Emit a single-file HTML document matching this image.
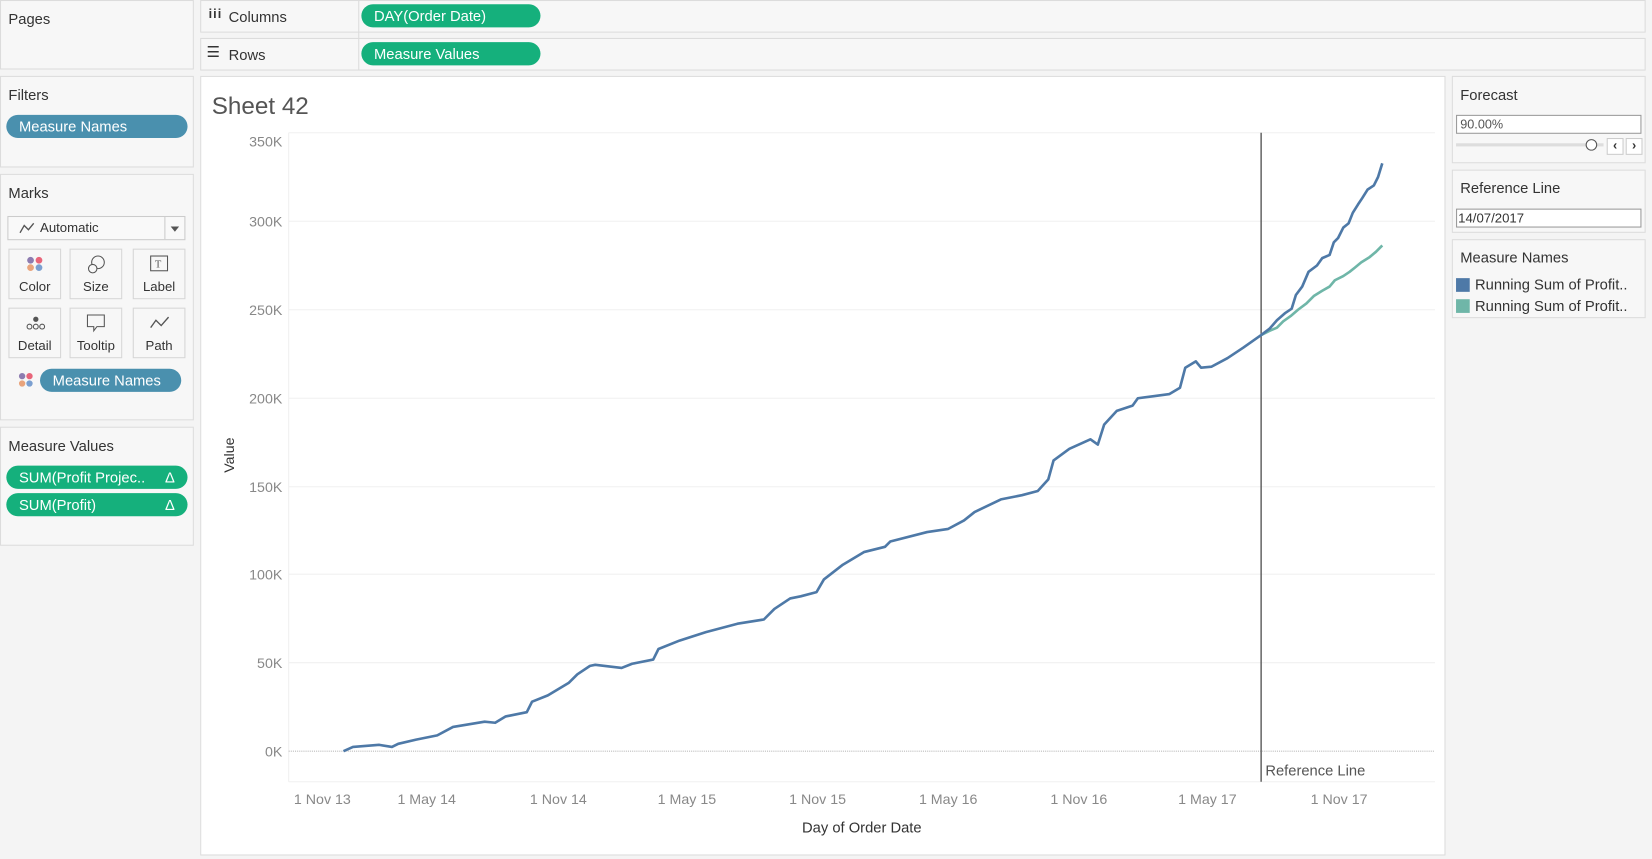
<!DOCTYPE html>
<html><head><meta charset="utf-8"><style>
html,body{margin:0;padding:0;background:#f4f4f4;overflow:hidden;width:1652px;height:859px}
#w{position:absolute;left:0;top:0;width:1568px;height:815px;transform:scale(1.05357);transform-origin:0 0;font-family:"Liberation Sans",sans-serif;color:#333}
.box{position:absolute;background:#f7f7f7;border:1px solid #dcdcdc;box-sizing:border-box}
.t{position:absolute;font-size:14px;color:#333}
.pill{position:absolute;border-radius:12px;color:#fff;font-size:14px;box-sizing:border-box;padding-left:12px;line-height:22px;height:22px}
.g{background:#15b07c}
.b{background:#4a90ae}
.mk{position:absolute;width:50px;height:48px;border:1px solid #d6d6d6;background:#f7f7f7;box-sizing:border-box;font-size:12.5px;text-align:center}
.mk span{position:absolute;left:0;right:0;bottom:4px}
.mk svg{position:absolute;left:15px;top:5px}
</style></head><body><div id="w">
<div class="box" style="left:0;top:0;width:184px;height:66px"></div>
<div class="t" style="left:8px;top:10px">Pages</div>
<div class="box" style="left:190px;top:0;width:1372px;height:31px"></div>
<div class="box" style="left:190px;top:36px;width:1372px;height:31px"></div>
<div style="position:absolute;left:340px;top:0;width:1px;height:67px;background:#dcdcdc"></div>
<div class="t" style="left:198px;top:6px;font-size:12px;font-weight:bold;letter-spacing:1px">iii</div>
<div class="t" style="left:217px;top:8px">Columns</div>
<div class="t" style="left:196px;top:41px;font-size:14px">☰</div>
<div class="t" style="left:217px;top:44px">Rows</div>
<div class="pill g" style="left:343px;top:4px;width:170px">DAY(Order Date)</div>
<div class="pill g" style="left:343px;top:40px;width:170px">Measure Values</div>

<div class="box" style="left:0;top:72px;width:184px;height:87px"></div>
<div class="t" style="left:8px;top:82px">Filters</div>
<div class="pill b" style="left:6px;top:109px;width:172px">Measure Names</div>

<div class="box" style="left:0;top:165px;width:184px;height:234px"></div>
<div class="t" style="left:8px;top:175px">Marks</div>
<div style="position:absolute;left:7px;top:205px;width:169px;height:23px;border:1px solid #ccc;background:#f9f9f9;box-sizing:border-box;font-size:12.5px;line-height:21px">
<svg width="16" height="12" style="position:absolute;left:10px;top:5px"><polyline points="1,10 5,3 9,7 14,1" fill="none" stroke="#555" stroke-width="1.3"/></svg>
<span style="position:absolute;left:30px">Automatic</span>
<div style="position:absolute;left:148px;top:0;width:1px;height:21px;background:#ccc"></div>
<div style="position:absolute;left:154px;top:9px;border-left:4px solid transparent;border-right:4px solid transparent;border-top:5px solid #555"></div></div>
<div class="mk" style="left:8px;top:236px"><svg width="20" height="18"><circle cx="5" cy="5" r="3.2" fill="#8d7cb0"/><circle cx="13" cy="5" r="3.2" fill="#e8657a"/><circle cx="5" cy="12" r="3.2" fill="#e9a47c"/><circle cx="13" cy="12" r="3.2" fill="#7b9fd0"/></svg><span>Color</span></div>
<div class="mk" style="left:66px;top:236px"><svg width="20" height="18"><circle cx="11" cy="7" r="6" fill="none" stroke="#555"/><circle cx="6" cy="13" r="4" fill="#f7f7f7" stroke="#555"/></svg><span>Size</span></div>
<div class="mk" style="left:126px;top:236px"><svg width="20" height="18"><rect x="1" y="1" width="16" height="14" fill="none" stroke="#555"/><text x="5" y="12" font-size="10" font-family="Liberation Serif" fill="#555">T</text></svg><span>Label</span></div>
<div class="mk" style="left:8px;top:292px"><svg width="20" height="18"><circle cx="10" cy="5" r="2.5" fill="#555"/><circle cx="4" cy="12" r="2.3" fill="none" stroke="#555"/><circle cx="10" cy="12" r="2.3" fill="none" stroke="#555"/><circle cx="16" cy="12" r="2.3" fill="none" stroke="#555"/></svg><span>Detail</span></div>
<div class="mk" style="left:66px;top:292px"><svg width="20" height="18"><path d="M1 1H17V12H10L7 16V12H1Z" fill="none" stroke="#555"/></svg><span>Tooltip</span></div>
<div class="mk" style="left:126px;top:292px"><svg width="20" height="18"><polyline points="1,13 6,6 11,11 18,3" fill="none" stroke="#555" stroke-width="1.3"/></svg><span>Path</span></div>
<svg width="16" height="16" style="position:absolute;left:17px;top:353px"><circle cx="4" cy="4" r="3" fill="#8d7cb0"/><circle cx="11" cy="4" r="3" fill="#e8657a"/><circle cx="4" cy="11" r="3" fill="#e9a47c"/><circle cx="11" cy="11" r="3" fill="#7b9fd0"/></svg>
<div class="pill b" style="left:38px;top:350px;width:134px">Measure Names</div>

<div class="box" style="left:0;top:405px;width:184px;height:113px"></div>
<div class="t" style="left:8px;top:415px">Measure Values</div>
<div class="pill g" style="left:6px;top:442px;width:172px">SUM(Profit Projec..<span style="position:absolute;right:12px">Δ</span></div>
<div class="pill g" style="left:6px;top:468px;width:172px">SUM(Profit)<span style="position:absolute;right:12px">Δ</span></div>

<div style="position:absolute;left:190px;top:72px;width:1182px;height:740px;background:#fff;border:1px solid #dcdcdc;box-sizing:border-box"></div>
<div class="t" style="left:201px;top:87px;font-size:23px;color:#555">Sheet 42</div>
<svg width="1568" height="815" style="position:absolute;left:0;top:0" font-family="Liberation Sans" font-size="13.5" fill="#888">
<g stroke="#f0f0f0" stroke-width="1"><line x1="274" y1="126" x2="1362" y2="126"/><line x1="274" y1="210" x2="1362" y2="210"/><line x1="274" y1="294" x2="1362" y2="294"/><line x1="274" y1="378" x2="1362" y2="378"/><line x1="274" y1="462" x2="1362" y2="462"/><line x1="274" y1="545" x2="1362" y2="545"/><line x1="274" y1="629" x2="1362" y2="629"/><line x1="274" y1="742" x2="1362" y2="742"/><line x1="274" y1="126" x2="274" y2="742"/></g>
<line x1="274" y1="713" x2="1362" y2="713" stroke="#bbb" stroke-dasharray="1,1"/>
<g text-anchor="end"><text x="268" y="139">350K</text><text x="268" y="215">300K</text><text x="268" y="299">250K</text><text x="268" y="383">200K</text><text x="268" y="467">150K</text><text x="268" y="550">100K</text><text x="268" y="634">50K</text><text x="268" y="718">0K</text></g>
<text x="222" y="432" transform="rotate(-90 222 432)" text-anchor="middle" fill="#333" font-size="13.5">Value</text>
<g text-anchor="middle"><text x="306" y="763">1 Nov 13</text><text x="405" y="763">1 May 14</text><text x="530" y="763">1 Nov 14</text><text x="652" y="763">1 May 15</text><text x="776" y="763">1 Nov 15</text><text x="900" y="763">1 May 16</text><text x="1024" y="763">1 Nov 16</text><text x="1146" y="763">1 May 17</text><text x="1271" y="763">1 Nov 17</text></g>
<text x="818" y="790" text-anchor="middle" fill="#333" font-size="14">Day of Order Date</text>
<line x1="1197" y1="126" x2="1197" y2="742" stroke="#555" stroke-width="1.3"/>
<text x="1201" y="736" fill="#555" font-size="14">Reference Line</text>
<polyline fill="none" stroke="#6fb6a8" stroke-width="2.5" stroke-linejoin="round" points="1197,318 1205,314 1212,311 1218,305 1225,300 1232,294 1240,288 1247,281 1255,276 1262,272 1267,266 1275,262 1281,258 1286,254 1292,249 1300,244 1306,239 1312,233"/>
<polyline fill="none" stroke="#4e79a7" stroke-width="2.5" stroke-linejoin="round" points="326,713 335,709 360,707 372,709 378,706 395,702 415,698 430,690 460,685 470,686 480,680 500,676 505,666 520,660 540,648 548,640 560,632 565,631 590,634 600,630 620,626 625,616 645,608 670,600 700,592 725,588 735,578 750,568 760,566 775,562 782,550 800,536 820,524 840,519 845,514 880,505 900,502 915,494 925,486 950,474 970,470 985,466 995,455 1000,437 1015,426 1035,417 1042,422 1048,403 1060,390 1075,385 1080,378 1095,376 1110,374 1120,368 1125,349 1135,343 1140,349 1150,348 1165,340 1180,330 1197,318 1205,312 1212,304 1220,297 1226,293 1230,280 1236,272 1242,258 1250,252 1255,245 1262,242 1266,230 1270,226 1275,216 1280,212 1284,202 1289,194 1293,188 1298,180 1304,176 1308,168 1312,155"/>
</svg>

<div class="box" style="left:1378px;top:72px;width:184px;height:83px"></div>
<div class="t" style="left:1386px;top:82px">Forecast</div>
<div style="position:absolute;left:1382px;top:109px;width:176px;height:18px;border:1px solid #999;background:#fff;box-sizing:border-box;font-size:12px;line-height:16px;padding-left:3px;color:#555">90.00%</div>
<div style="position:absolute;left:1382px;top:136px;width:140px;height:3px;background:#ddd"></div>
<div style="position:absolute;left:1505px;top:132px;width:9px;height:9px;border:1px solid #555;border-radius:50%;background:#fff"></div>
<div style="position:absolute;left:1525px;top:131px;width:14px;height:14px;border:1px solid #ccc;background:#fff;font-size:12px;font-weight:bold;text-align:center;line-height:13px">‹</div>
<div style="position:absolute;left:1543px;top:131px;width:14px;height:14px;border:1px solid #ccc;background:#fff;font-size:12px;font-weight:bold;text-align:center;line-height:13px">›</div>

<div class="box" style="left:1378px;top:161px;width:184px;height:60px"></div>
<div class="t" style="left:1386px;top:170px">Reference Line</div>
<div style="position:absolute;left:1382px;top:198px;width:176px;height:18px;border:1px solid #999;background:#fff;box-sizing:border-box;font-size:12.5px;line-height:16px;padding-left:1px;color:#333">14/07/2017</div>

<div class="box" style="left:1378px;top:227px;width:184px;height:75px"></div>
<div class="t" style="left:1386px;top:236px">Measure Names</div>
<div style="position:absolute;left:1382px;top:264px;width:13px;height:13px;background:#4e79a7"></div>
<div class="t" style="left:1400px;top:262px;font-size:14px">Running Sum of Profit..</div>
<div style="position:absolute;left:1382px;top:284px;width:13px;height:13px;background:#6fb6a8"></div>
<div class="t" style="left:1400px;top:282px;font-size:14px">Running Sum of Profit..</div>
</div></body></html>
